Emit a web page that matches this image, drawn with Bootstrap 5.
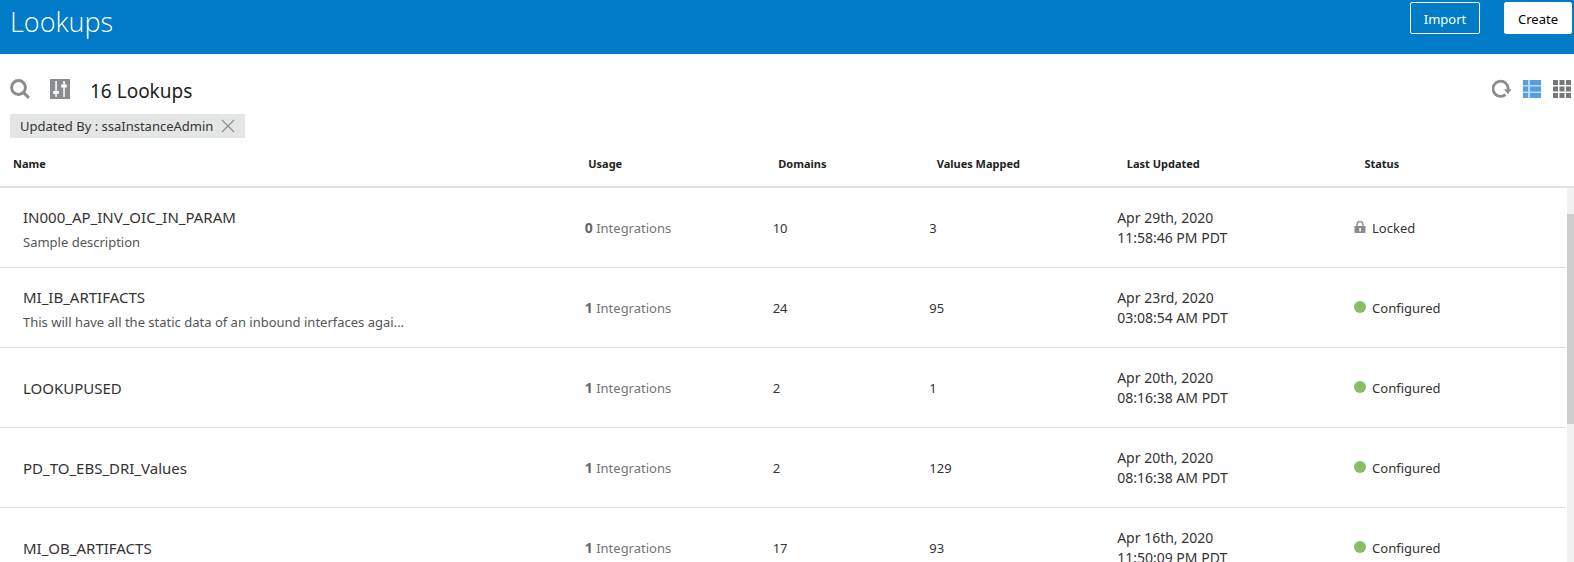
<!DOCTYPE html>
<html lang="en">
<head>
<meta charset="utf-8">
<meta name="viewport" content="width=device-width, initial-scale=1">
<title>Lookups</title>
<link href="https://cdn.jsdelivr.net/npm/bootstrap@5.3.0/dist/css/bootstrap.min.css" rel="stylesheet">
<style>
  body { font-family: "Noto Sans", "Open Sans", sans-serif; font-size: 13px; line-height: 20px; color: #333; background: #fff; }
  .topbar { background: #007bc8; height: 54px; padding: 2px 2px 0 10px; }
  .topbar h1 { font-family: "Open Sans", sans-serif; font-size: 27px; line-height: 40px; font-weight: 300; color: #fff; }
  .topbar .btn { font-size: 13px; line-height: 20px; height: 32px; padding: 6px 12px 4px; border-radius: 2px; }
  .btn-import { width: 70px; color: #fff; border-color: #fff; }
  .btn-create { width: 68px; color: #000; background: #fff; border-color: #fff; }
  .tools { height: 60px; padding: 25px 3px 0 10px; }
  .tools h2 { font-size: 19px; line-height: 24px; color: #222; }
  .tool-btn { border: 0; padding: 0; background: none; line-height: 0; }
  .chip-row { padding-left: 10px; }
  .chip { height: 24px; padding: 0 10px; background: #e4e6e5; line-height: 24px; }
  .grid-table { table-layout: fixed; width: 100%; margin: 0; border-collapse: separate; border-spacing: 0; }
  .head-wrap { border-bottom: 2px solid #e0e0e0; }
  .head-table { width: calc(100% + 10px); }
  .head-table th { height: 48px; padding: 4px 0 0 18px; font-size: 11px; font-weight: 700; color: #222; }
  .head-table th:first-child { padding-left: 13px; }
  .body-table td { height: 80px; padding: 0 0 0 21px; border-bottom: 1px solid #e0e0e0; vertical-align: middle; }
  .body-table td:first-child { padding-left: 23px; padding-right: 150px; }
  .body-table td:last-child { padding-left: 23px; }
  .c-name { width: 36%; } .c-usage { width: 12%; } .c-num { width: 10%; } .c-values { width: 12%; } .c-wide { width: 15%; }
  .lk-name { display: block; font-size: 15px; line-height: 24px; color: #333; text-decoration: none; }
  .lk-desc { line-height: 18px; padding-top: 4px; color: #555; }
  .usage { color: #757575; }
  .usage b { font-size: 14px; color: #666; }
  .when { font-size: 14px; }
  .dot { width: 12px; height: 12px; border-radius: 50%; background: #86bd66; }
  .status-ico { width: 12px; line-height: 0; padding-bottom: 2px; margin-right: 6px; }
  .track { width: 7px; background: #f1f1f1; margin-left: 1px; }
  .thumb { background: #cdcdcd; }
</style>
</head>
<body>
<div class="d-flex flex-column vh-100 overflow-hidden">
  <header class="topbar d-flex align-items-start justify-content-between flex-shrink-0">
    <h1 class="m-0">Lookups</h1>
    <div class="d-flex gap-4">
      <button type="button" class="btn btn-import">Import</button>
      <button type="button" class="btn btn-create">Create</button>
    </div>
  </header>

  <div class="tools d-flex justify-content-between align-items-start flex-shrink-0">
    <div class="d-flex align-items-start">
      <button type="button" class="tool-btn me-3 pe-1" aria-label="Search">
        <svg width="20" height="20" viewBox="0 0 20 20" fill="none" stroke="#8a8d8f"><circle cx="8.500" cy="8.500" r="6.900" stroke-width="3"/><path d="M13.300 13.300L19 18.800" stroke-width="3"/></svg>
      </button>
      <button type="button" class="tool-btn me-3 pe-1" aria-label="Filter">
        <svg width="20" height="20" viewBox="0 0 20 20"><path fill="#8a8d8f" d="M0 0h20v20H0z"/><path fill="#fff" d="M5.300 2h1.500v16H5.300zM3.200 12h5.600v3H3.200zM13.300 2h1.500v16h-1.500zM11.200 5.500h5.600v3h-5.600z"/></svg>
      </button>
      <h2 class="m-0 fw-normal">16 Lookups</h2>
    </div>
    <div class="d-flex align-items-start gap-2">
      <button type="button" class="tool-btn me-1" aria-label="Refresh">
        <svg width="19" height="20" viewBox="0 -1 19 20"><path d="M13.500 14.600A7.600 7.600 0 1 1 16.200 9.500" fill="none" stroke="#8a8d8f" stroke-width="2.800"/><path d="M12 9.300H19.500l-3.500 5z" fill="#8a8d8f"/></svg>
      </button>
      <button type="button" class="tool-btn me-1" aria-label="List view">
        <svg width="18" height="20" viewBox="0 -1 18 20"><path fill="#b9d8f3" d="M0 0h18v18H0z"/><path fill="#539fe0" d="M0 0h5v5H0zM7 0h11v5H7zM0 6.500h5v5H0zM7 6.500h11v5H7zM0 13h5v5H0zM7 13h11v5H7z"/></svg>
      </button>
      <button type="button" class="tool-btn" aria-label="Grid view">
        <svg width="18" height="20" viewBox="0 -1 18 20" fill="#77787a"><path d="M0 0h5v5H0zM6.500 0h5v5h-5zM13 0h5v5h-5zM0 6.500h5v5H0zM6.500 6.500h5v5h-5zM13 6.500h5v5h-5zM0 13h5v5H0zM6.500 13h5v5h-5zM13 13h5v5h-5z"/></svg>
      </button>
    </div>
  </div>

  <div class="chip-row d-flex flex-shrink-0">
    <div class="chip d-flex align-items-center gap-2">
      <span>Updated By : ssaInstanceAdmin</span>
      <button type="button" class="tool-btn" aria-label="Remove filter">
        <svg width="14" height="14" viewBox="0 0 14 14" stroke="#8a8d8f" stroke-width="1.200"><path d="M1 1l12 12M13 1L1 13"/></svg>
      </button>
    </div>
  </div>

  <div class="head-wrap overflow-hidden flex-shrink-0">
    <table class="grid-table head-table">
      <thead><tr>
        <th class="c-name" scope="col">Name</th><th class="c-usage" scope="col">Usage</th><th class="c-num" scope="col">Domains</th><th class="c-values" scope="col">Values Mapped</th><th class="c-wide" scope="col">Last Updated</th><th class="c-wide" scope="col">Status</th>
      </tr></thead>
    </table>
  </div>

  <div class="d-flex flex-fill overflow-hidden">
    <div class="flex-fill overflow-hidden">
      <table class="grid-table body-table">
        <colgroup><col class="c-name"><col class="c-usage"><col class="c-num"><col class="c-values"><col class="c-wide"><col class="c-wide"></colgroup>
        <tbody>
          <tr>
            <td><a href="#" class="lk-name">IN000_AP_INV_OIC_IN_PARAM</a><div class="lk-desc text-truncate">Sample description</div></td>
            <td class="usage"><b>0</b> Integrations</td><td>10</td><td>3</td>
            <td class="when">Apr 29th, 2020<br>11:58:46 PM PDT</td>
            <td><div class="d-flex align-items-center"><span class="status-ico"><svg width="12" height="12" viewBox="0 0 12 12"><path d="M3 5.500V3.500a3 3 0 0 1 6 0v2" fill="none" stroke="#8a8d8f" stroke-width="1.500"/><path d="M.5 5h11v7H.5z" fill="#8a8d8f"/><path d="M5.300 7h1.500v3.500H5.300z" fill="#fff"/></svg></span>Locked</div></td>
          </tr>
          <tr>
            <td><a href="#" class="lk-name">MI_IB_ARTIFACTS</a><div class="lk-desc text-truncate">This will have all the static data of an inbound interfaces agai...</div></td>
            <td class="usage"><b>1</b> Integrations</td><td>24</td><td>95</td>
            <td class="when">Apr 23rd, 2020<br>03:08:54 AM PDT</td>
            <td><div class="d-flex align-items-center"><span class="status-ico"><span class="dot d-block"></span></span>Configured</div></td>
          </tr>
          <tr>
            <td><a href="#" class="lk-name">LOOKUPUSED</a></td>
            <td class="usage"><b>1</b> Integrations</td><td>2</td><td>1</td>
            <td class="when">Apr 20th, 2020<br>08:16:38 AM PDT</td>
            <td><div class="d-flex align-items-center"><span class="status-ico"><span class="dot d-block"></span></span>Configured</div></td>
          </tr>
          <tr>
            <td><a href="#" class="lk-name">PD_TO_EBS_DRI_Values</a></td>
            <td class="usage"><b>1</b> Integrations</td><td>2</td><td>129</td>
            <td class="when">Apr 20th, 2020<br>08:16:38 AM PDT</td>
            <td><div class="d-flex align-items-center"><span class="status-ico"><span class="dot d-block"></span></span>Configured</div></td>
          </tr>
          <tr>
            <td><a href="#" class="lk-name">MI_OB_ARTIFACTS</a></td>
            <td class="usage"><b>1</b> Integrations</td><td>17</td><td>93</td>
            <td class="when">Apr 16th, 2020<br>11:50:09 PM PDT</td>
            <td><div class="d-flex align-items-center"><span class="status-ico"><span class="dot d-block"></span></span>Configured</div></td>
          </tr>
        </tbody>
      </table>
    </div>
    <div class="track d-flex flex-column flex-shrink-0" aria-hidden="true">
      <div style="height: 7%"></div>
      <div class="thumb" style="height: 56%"></div>
    </div>
  </div>
</div>
<script src="https://cdn.jsdelivr.net/npm/bootstrap@5.3.0/dist/js/bootstrap.bundle.min.js"></script>
</body>
</html>
